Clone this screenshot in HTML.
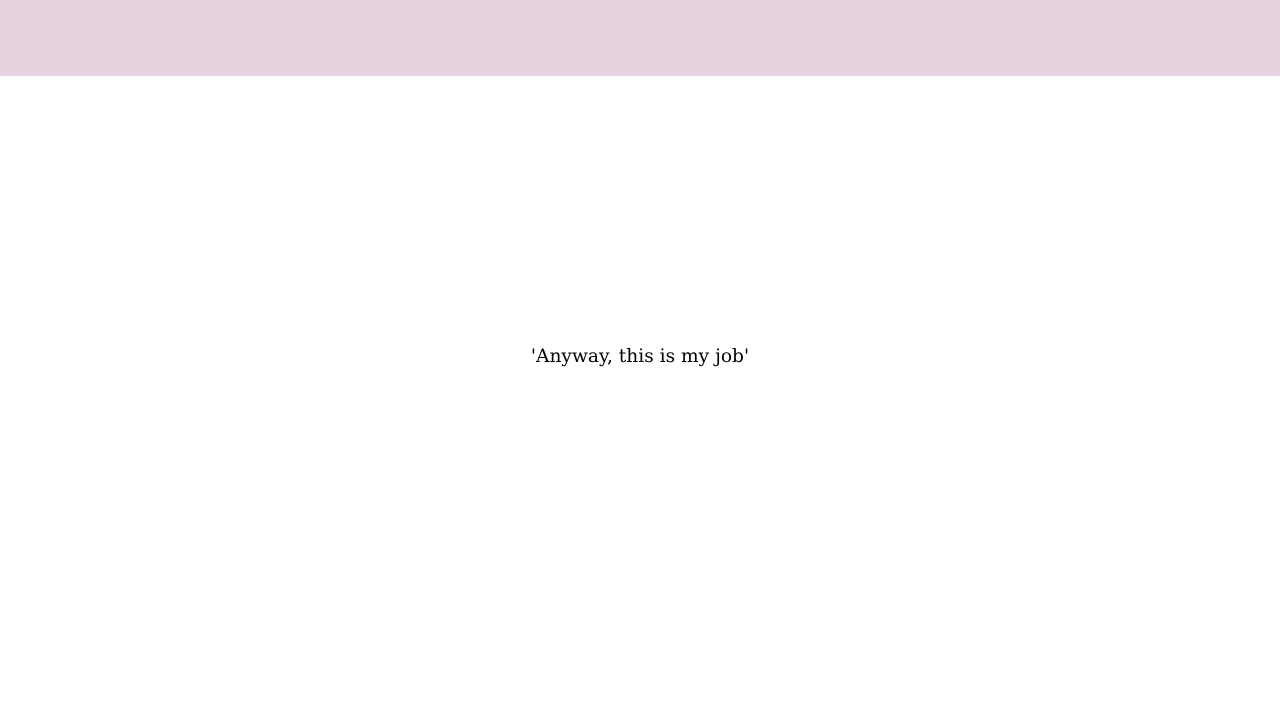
<!DOCTYPE html>
<html><head><style>
html,body{margin:0;padding:0;width:1280px;height:720px;background:#fff;overflow:hidden}
.top{position:absolute;left:0;top:0;width:1280px;height:76px;background:#e5d4df}
.t{position:absolute;left:0;width:1280px;top:344px;text-align:center;font-family:"DejaVu Serif",serif;font-size:18.6px;line-height:26px;color:#000}
</style></head><body>
<div class="top"></div>
<div class="t">'Anyway, this is my job'</div>
</body></html>
